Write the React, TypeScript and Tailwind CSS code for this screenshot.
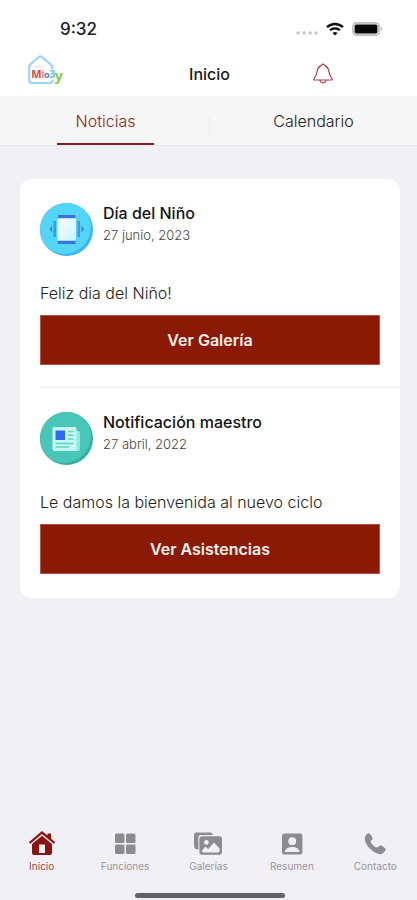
import React from "react";

const MAROON = "#8b1410";

function StatusBar() {
  return (
    <div className="flex h-13 items-center justify-between bg-white pt-1.5 pr-[34px] pl-[60px]">
      <span className="text-[17px] leading-5 font-medium text-[#1c1c1c]">9:32</span>
      <div className="flex items-center">
        <svg className="mt-2 mr-2" width="22" height="6" viewBox="0 0 22 6" fill="#c6c6c8">
          <circle cx="2.2" cy="3" r="1.7" />
          <circle cx="8.2" cy="3" r="1.7" />
          <circle cx="14.2" cy="3" r="1.7" />
          <circle cx="20" cy="3" r="1.7" />
        </svg>
        <svg className="mr-2" width="18" height="14" viewBox="0 0 18 14" fill="none" stroke="#111">
          <path d="M1 5.2 A11.6 11.6 0 0 1 17 5.2" strokeWidth="2.4" />
          <path d="M4 8.3 A7.2 7.2 0 0 1 14 8.3" strokeWidth="2.2" />
          <path d="M9 13.6 L6.5 11.1 A3.6 3.6 0 0 1 11.5 11.1 Z" fill="#111" stroke="none" />
        </svg>
        <svg width="31" height="14" viewBox="0 0 31 14">
          <rect x="1" y="1" width="26" height="12" rx="3.4" fill="#fff" stroke="#c4c4c6" strokeWidth="2" />
          <rect x="2.6" y="2.6" width="22.8" height="8.8" rx="1.6" fill="#050505" />
          <path d="M28.6 4.8 Q30.4 5.4 30.4 7 Q30.4 8.6 28.6 9.2 Z" fill="#bdbdbf" />
        </svg>
      </div>
    </div>
  );
}

function Logo() {
  return (
    <svg width="38" height="32" viewBox="0 0 38 32" role="img" aria-label="MiCoy" fontFamily="'Open Sans', sans-serif" fontWeight="700">
      <path
        d="M25.4 14.5 V13.4 Q25.4 11.8 24.2 10.8 L14.8 2.8 Q13.4 1.8 12 2.8 L3.4 10.4 Q2.2 11.4 2.2 13 V26 Q2.2 29 5.2 29 H22 Q25 29 25.8 26.8"
        fill="none"
        stroke="#9dd4f7"
        strokeWidth="2.2"
        strokeLinecap="round"
      />
      <path d="M8 12.6 H17" stroke="#e6e3e3" strokeWidth="1.2" />
      <text x="4.2" y="24" fontSize="11" fill="#e8433c">M</text>
      <text x="14.4" y="24" fontSize="10" fill="#f08a5c">i</text>
      <text x="17" y="24" fontSize="9" fill="#5672d8">o</text>
      <text x="22" y="24" fontSize="11" fill="#5fc4ee">3</text>
      <text x="27.6" y="26.6" fontSize="15" fill="#8ccb45">y</text>
    </svg>
  );
}

function Header() {
  return (
    <header className="grid h-11 grid-cols-[1fr_auto_1fr] items-center bg-white pl-0.5">
      <div className="pb-2 pl-[25px]">
        <Logo />
      </div>
      <h1 className="text-base font-medium text-[#1a1a1a]">Inicio</h1>
      <div className="flex pl-[83px]">
        <button type="button" aria-label="Notificaciones">
          <svg width="20" height="22" viewBox="0 0 20 22" fill="none" stroke="#a8404a" strokeWidth="1.2" strokeLinejoin="round">
            <path d="M10 1 L7.8 2.6 C5.6 3.8 4.6 5.4 4.2 8 C3.8 11 3 13 0.9 15.8 Q0.4 17 1.6 17 H18.4 Q19.6 17 19.1 15.8 C17 13 16.2 11 15.8 8 C15.4 5.4 14.4 3.8 12.2 2.6 Z" />
            <path d="M6.8 17.2 C7.4 19.2 8.6 19.8 10 19.8 C11.4 19.8 12.6 19.2 13.2 17.2" />
          </svg>
        </button>
      </div>
    </header>
  );
}

function Tabs() {
  return (
    <div role="tablist" className="flex items-center border-b border-[#e9eaee] bg-[#f6f6f6] pl-0.5 text-base font-light">
      <div className="flex flex-1 justify-center">
        <button type="button" role="tab" aria-selected="true" className="h-[49px] w-[97px] border-b-2 border-[#861c22] pt-0.5 text-[#8b1f24]">
          Noticias
        </button>
      </div>
      <div className="mt-2.5 h-5 w-px bg-[#ededee]" />
      <div className="flex flex-1 justify-center">
        <button type="button" role="tab" aria-selected="false" className="h-[49px] border-b-2 border-transparent pt-0.5 text-[#222]">
          Calendario
        </button>
      </div>
    </div>
  );
}

function GalleryIcon() {
  return (
    <svg className="size-[53px] shrink-0" viewBox="0 0 53 53">
      <defs>
        <clipPath id="gallery-disc">
          <circle cx="26.5" cy="26.5" r="26.5" />
        </clipPath>
        <linearGradient id="gallery-card" x1="0" y1="0" x2="1" y2="1">
          <stop offset="0" stopColor="#f2fdff" />
          <stop offset="1" stopColor="#cdf3fd" />
        </linearGradient>
      </defs>
      <g clipPath="url(#gallery-disc)">
        <rect width="53" height="53" fill="#3db4f4" />
        <circle cx="24" cy="24" r="27" fill="#53d5f8" />
      </g>
      <path d="M18 12 H35.5 V15 H18 Z M18 38 H35.5 V41 H18 Z" fill="#3f6fe0" />
      <path d="M13.5 18 H16 V34 H13.5 Z M37.5 18 H40 V34 H37.5 Z" fill="#3a9aec" />
      <path d="M9.5 26 L12 22.5 V29.5 Z M44 26 L41.5 22.5 V29.5 Z" fill="#3f7fe4" />
      <rect x="17.5" y="15.5" width="18.5" height="22" rx="1.5" fill="url(#gallery-card)" />
    </svg>
  );
}

function NewsIcon() {
  return (
    <svg className="size-[53px] shrink-0" viewBox="0 0 53 53">
      <defs>
        <clipPath id="news-disc">
          <circle cx="26.5" cy="26.5" r="26.5" />
        </clipPath>
      </defs>
      <g clipPath="url(#news-disc)">
        <rect width="53" height="53" fill="#3aada0" />
        <circle cx="24" cy="24" r="27" fill="#48c6b8" />
      </g>
      <path d="M34 19 H38.5 Q40 19 40 20.5 V37 Q40 39 38 39 H32 Z" fill="#8eeade" />
      <path d="M14 15 H35 Q36.5 15 36.5 16.5 V39 H15 Q12.5 39 12.5 36.5 V16.5 Q12.5 15 14 15 Z" fill="#c5f8f1" />
      <rect x="15.5" y="18.5" width="9.5" height="9.5" fill="#2d6af2" />
      <path d="M28 19.5 H33.5 M28 23.2 H33.5 M28 27 H33.5 M15.5 31.5 H33.5 M15.5 35 H29" stroke="#63d3c6" strokeWidth="1.4" />
    </svg>
  );
}

type NewsItemProps = {
  icon: React.ReactNode;
  title: string;
  date: string;
  text: string;
  action: string;
};

function NewsItem({ icon, title, date, text, action }: NewsItemProps) {
  return (
    <article className="pt-6 pr-5">
      <div className="flex h-13 gap-2.5">
        {icon}
        <div>
          <h2 className="text-base leading-5 font-medium text-[#141414]">{title}</h2>
          <p className="mt-0.5 text-[13px] leading-5 font-light text-[#444]">{date}</p>
        </div>
      </div>
      <p className="mt-[26px] text-base leading-6 font-light text-[#222]">{text}</p>
      <button type="button" className="mt-2.5 h-[50px] w-full border border-[#b8504a] bg-[#8b1a04] text-base font-semibold text-[#fbf1ef]">
        {action}
      </button>
    </article>
  );
}

function HomeIcon() {
  return (
    <svg width="28" height="26" viewBox="0 0 28 26" fill={MAROON}>
      <path d="M14 1 L19.5 5.6 V3.5 H23 V8.6 L27.2 12.2 L25.8 13.8 L14 4 L2.2 13.8 L0.8 12.2 Z" />
      <path d="M14 5.8 L24 14 V23 Q24 25 22 25 H6 Q4 25 4 23 V14 Z M11 14.5 V23 H17 V14.5 Z" fillRule="evenodd" />
    </svg>
  );
}

function GridIcon() {
  return (
    <svg width="28" height="26" viewBox="0 0 28 26" fill="#8b8b90">
      <rect x="4" y="3.5" width="9.5" height="9.5" rx="1.6" />
      <rect x="15" y="3.5" width="9.5" height="9.5" rx="1.6" />
      <rect x="4" y="14.5" width="9.5" height="9.5" rx="1.6" />
      <rect x="15" y="14.5" width="9.5" height="9.5" rx="1.6" />
    </svg>
  );
}

function PhotosIcon() {
  return (
    <svg width="30" height="26" viewBox="0 0 30 26">
      <path d="M3 2.4 H17.6 Q19.6 2.4 20 5 H7.6 Q5.4 5 5.4 7.4 V19.5 Q1 19.5 1 16 V4.6 Q1 2.4 3 2.4 Z" fill="#8b8b90" />
      <rect x="6.4" y="6.2" width="22.6" height="18.6" rx="2.8" fill="#8b8b90" />
      <circle cx="13.4" cy="12.4" r="2.3" fill="#f1f0f5" />
      <path d="M8.8 20.8 L12.4 16.6 L15.2 19 L21 12.6 L26.6 18.4 V20.6 Q26.6 22.4 25 22.4 H10.2 Q8.8 22.4 8.8 20.8 Z" fill="#f1f0f5" />
    </svg>
  );
}

function PersonIcon() {
  return (
    <svg width="28" height="26" viewBox="0 0 28 26">
      <rect x="4" y="3.5" width="20.4" height="21" rx="2.6" fill="#8b8b90" />
      <circle cx="14.2" cy="11.2" r="3.9" fill="#f1f0f5" />
      <path d="M6.8 22 C7.4 18.4 10.4 17 14.2 17 C18 17 21 18.4 21.6 22 Z" fill="#f1f0f5" />
    </svg>
  );
}

function PhoneIcon() {
  return (
    <svg width="28" height="26" viewBox="0 0 28 26" fill="#8b8b90">
      <path d="M4.4 6 C5.4 4.2 7 3.2 8.2 3.4 C9.2 3.8 11.4 6.8 11.6 8.2 C11.6 9.6 9.6 10.4 9.6 11.4 C9.8 13.2 13.8 17.2 15.8 17.6 C17 17.8 17.8 15.4 19.4 15.4 C20.8 15.4 24.2 17.8 24.6 19 C24.8 20.8 22.8 23 21 23.8 C18.4 25 13.6 23 9.4 19 C5.2 15 2.6 9.6 4.4 6 Z" />
    </svg>
  );
}

const NAV = [
  { label: "Inicio", icon: <HomeIcon />, active: true },
  { label: "Funciones", icon: <GridIcon />, active: false },
  { label: "Galerías", icon: <PhotosIcon />, active: false },
  { label: "Resumen", icon: <PersonIcon />, active: false },
  { label: "Contacto", icon: <PhoneIcon />, active: false },
];

export default function App() {
  return (
    <div className="flex min-h-screen flex-col bg-[#f1f0f5] font-['Inter',sans-serif]">
      <StatusBar />
      <Header />
      <Tabs />
      <main className="flex-1 pt-[33px] pr-[17px] pb-6 pl-5">
        <section className="divide-y divide-[#ececee] rounded-xl bg-white pb-6 pl-5 [&>article:first-child]:pb-[22px]">
          <NewsItem icon={<GalleryIcon />} title="Día del Niño" date="27 junio, 2023" text="Feliz dia del Niño!" action="Ver Galería" />
          <NewsItem
            icon={<NewsIcon />}
            title="Notificación maestro"
            date="27 abril, 2022"
            text="Le damos la bienvenida al nuevo ciclo"
            action="Ver Asistencias"
          />
        </section>
      </main>
      <nav className="grid grid-cols-5">
        {NAV.map((item) => (
          <a
            key={item.label}
            href="#"
            className={`flex flex-col items-center gap-1 text-[10px] leading-3 ${item.active ? "text-[#a04a4c]" : "text-[#96969c]"}`}
          >
            {item.icon}
            {item.label}
          </a>
        ))}
      </nav>
      <div className="flex justify-center pt-[21px] pb-0.5 pl-0.5">
        <div className="h-[5px] w-[150px] rounded-full bg-[#636366]" />
      </div>
    </div>
  );
}
